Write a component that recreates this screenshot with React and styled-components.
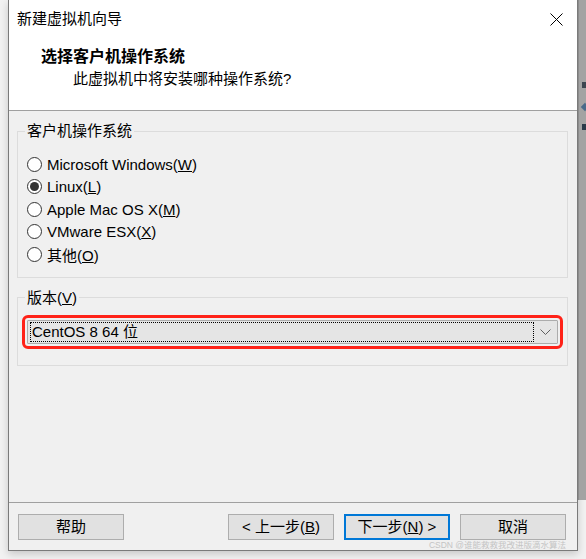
import React from "react"
import styled, { createGlobalStyle } from "styled-components"

const GlobalStyle = createGlobalStyle`
   body {
      margin: 0;
      background: #f2f2f2;
      font-family: "Liberation Sans", "Noto Sans CJK SC", sans-serif;
      font-size: 15px;
      color: #000;
   }
`

const osList = [
   { label: "Microsoft Windows", key: "W" },
   { label: "Linux", key: "L", checked: true },
   { label: "Apple Mac OS X", key: "M" },
   { label: "VMware ESX", key: "X" },
   { label: "其他", key: "O" },
]

const CloseIcon = () => (
   <svg width="13" height="13" viewBox="0 0 13 13">
      <path d="M0.5 0.5 L12.5 12.5 M12.5 0.5 L0.5 12.5" stroke="#000" strokeWidth="1" fill="none" />
   </svg>
)

const Chevron = () => (
   <svg width="11" height="6" viewBox="0 0 11 6">
      <path d="M0.5 0.5 L5.5 5.5 L10.5 0.5" stroke="#606060" strokeWidth="1" fill="none" />
   </svg>
)

const App = () => {
   return (
      <Page>
         <GlobalStyle />
         <Gutter />
         <Window>
            <TitleBar>
               <span>新建虚拟机向导</span>
               <CloseIcon />
            </TitleBar>
            <Header>
               <Heading>选择客户机操作系统</Heading>
               <SubHeading>此虚拟机中将安装哪种操作系统?</SubHeading>
            </Header>

            <Body>
               <Group>
                  <Legend>客户机操作系统</Legend>
                  <RadioList>
                     {osList.map(os => (
                        <RadioRow key={os.key}>
                           <RadioCircle checked={os.checked} />
                           <span>{os.label}(<u>{os.key}</u>)</span>
                        </RadioRow>
                     ))}
                  </RadioList>
               </Group>

               <Group $gap>
                  <Legend>版本(<u>V</u>)</Legend>
                  <Select>
                     <FocusBox>CentOS 8 64 位</FocusBox>
                     <ChevronBox><Chevron /></ChevronBox>
                  </Select>
               </Group>
            </Body>

            <Footer>
               <Button $push>帮助</Button>
               <Button>&lt; 上一步(<u>B</u>)</Button>
               <Button $primary>下一步(<u>N</u>) &gt;</Button>
               <Button>取消</Button>
               <Watermark>CSDN @谁能救救我改进版滴水算法</Watermark>
            </Footer>
         </Window>
         <SideStrip>
            <Fragment $top={82} $color="#3c4650" />
            <Fragment $top={104} $color="#4a6a8a" $diamond />
            <Fragment $top={124} $color="#2a3a4a" />
         </SideStrip>
      </Page>
   )
}

const Page = styled.div`
   display: flex;
   width: 586px;
   height: 559px;
   overflow: hidden;
   background: #f2f2f2;
`

const Gutter = styled.div`
   width: 8px;
   flex-shrink: 0;
`

const Window = styled.div`
   position: relative;
   width: 570px;
   height: 551px;
   flex-shrink: 0;
   box-sizing: border-box;
   display: flex;
   flex-direction: column;
   border: 1px solid #7a7a7a;
   border-top: none;
   background: #f0f0f0;
   box-shadow: 0 3px 8px rgba(0, 0, 0, 0.18);
`

const TitleBar = styled.div`
   height: 38px;
   display: flex;
   align-items: center;
   justify-content: space-between;
   padding: 0 14px 0 8px;
   background: #fff;
   line-height: 20px;
`

const Header = styled.div`
   height: 73px;
   padding: 9px 0 0 32px;
   box-sizing: border-box;
   background: #fff;
   border-bottom: 1px solid #a0a0a0;
`

const Heading = styled.div`
   font-size: 16px;
   font-weight: bold;
   line-height: 20px;
`

const SubHeading = styled.div`
   margin: 2px 0 0 32px;
   line-height: 20px;
`

const Body = styled.div`
   flex: 1;
   padding: 10px 9px 0 8px;
`

const Group = styled.fieldset`
   margin: ${p => (p.$gap ? "10px" : "0")} 0 0 0;
   padding: 0 9px ${p => (p.$gap ? "21px" : "11px")};
   border: 1px solid #dcdcdc;
   min-width: 0;
`

const Legend = styled.legend`
   padding: 0 2px;
   margin-left: -2px;
   line-height: 20px;
`

const RadioList = styled.div`
   padding-top: 12px;
`

const RadioRow = styled.div`
   height: 22.5px;
   display: flex;
   align-items: center;
   gap: 5px;
`

const RadioCircle = styled.span`
   width: 15px;
   height: 15px;
   box-sizing: border-box;
   border: 1px solid #333;
   border-radius: 50%;
   background: #fff;
   display: flex;
   align-items: center;
   justify-content: center;

   &::after {
      content: "";
      width: 9px;
      height: 9px;
      border-radius: 50%;
      background: #333;
      display: ${p => (p.checked ? "block" : "none")};
   }
`

const Select = styled.div`
   margin-top: 12px;
   height: 24px;
   box-sizing: border-box;
   display: flex;
   align-items: center;
   background: #e5e5e5;
   border: 1px solid #acacac;
   border-radius: 1px;
   outline: 3px solid #ff2218;
   outline-offset: 2px;
`

const FocusBox = styled.div`
   flex: 1;
   height: 20px;
   margin: 0 0 0 2px;
   box-sizing: border-box;
   border: 1px dotted #000;
   padding-left: 1px;
   line-height: 18px;
`

const ChevronBox = styled.div`
   width: 23px;
   display: flex;
   justify-content: center;
   align-items: center;
   padding-top: 1px;
`

const Footer = styled.div`
   position: relative;
   height: 48px;
   box-sizing: border-box;
   border-top: 1px solid #a0a0a0;
   padding: 11px 11px 0 9px;
   display: flex;
   gap: 10px;
`

const Button = styled.div`
   width: 106px;
   height: 26px;
   box-sizing: border-box;
   display: flex;
   align-items: center;
   justify-content: center;
   background: #e1e1e1;
   border: ${p => (p.$primary ? "2px solid #0078d7" : "1px solid #adadad")};
   margin-right: ${p => (p.$push ? "auto" : "0")};
   line-height: 20px;
`

const Watermark = styled.div`
   position: absolute;
   right: 11px;
   bottom: -1px;
   font-size: 8.5px;
   line-height: 12px;
   color: #c4c4c4;
`

const SideStrip = styled.div`
   flex: 1;
   height: 500px;
   position: relative;
   background: #a3a3a3;
   border-left: 1px solid #8c8c8c;
   overflow: hidden;
`

const Fragment = styled.div`
   position: absolute;
   left: 3px;
   top: ${p => p.$top}px;
   width: 6px;
   height: 6px;
   background: ${p => p.$color};
   transform: ${p => (p.$diamond ? "rotate(45deg)" : "none")};
`

export default App
